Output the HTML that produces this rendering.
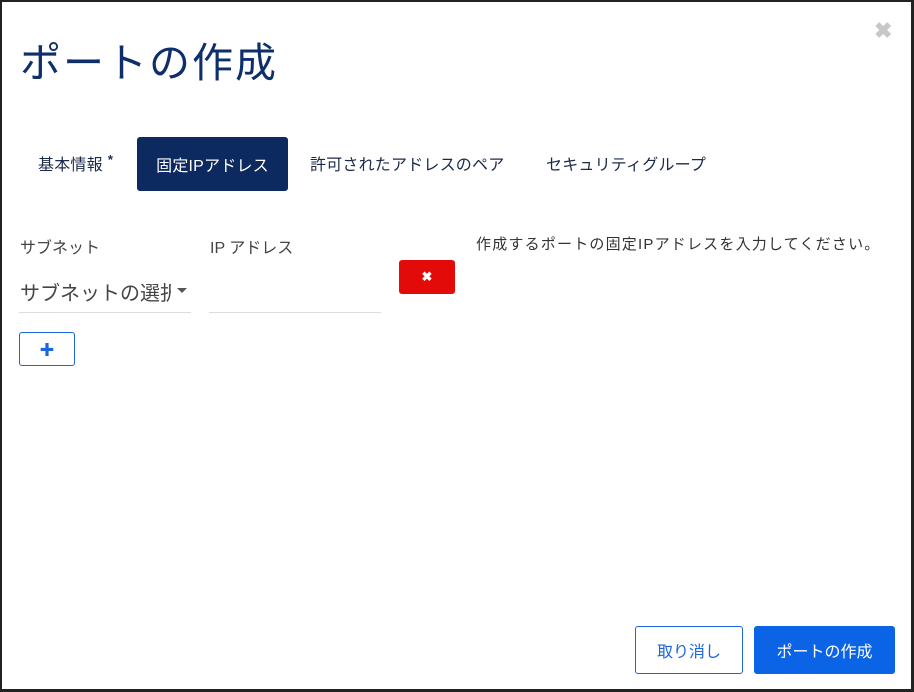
<!DOCTYPE html>
<html><head><meta charset="utf-8"><style>
*{box-sizing:border-box;margin:0;padding:0}
body{width:914px;height:692px;background:#fff;font-family:"Liberation Sans","Noto Sans CJK JP",sans-serif;position:relative;overflow:hidden}
.frame{position:absolute;left:0;top:0;width:914px;height:692px;border:2px solid #222;border-right-width:3px;border-bottom-width:3px}
.a{position:absolute;white-space:nowrap}
.f{display:flex;align-items:center;justify-content:center}
h1{position:absolute;left:20px;top:29px;font-size:41px;font-weight:400;color:#0e2f6b;letter-spacing:2px}
.close{position:absolute;left:874px;top:18px;font-size:22px;color:#c8c8c8;font-weight:bold}
.tab{font-size:16px;color:#1b2a4a;letter-spacing:0.2px}
.active{left:137px;top:137px;width:151px;height:54px;background:#0d2a60;border-radius:3px;color:#fff}
.lbl{font-size:16px;color:#444}
.line{position:absolute;height:1px;background:#ddd}
.del{left:399px;top:260px;width:56px;height:34px;background:#e30a0a;border-radius:3px;color:#fff;font-size:13px;font-weight:bold}
.add{left:19px;top:332px;width:56px;height:34px;border:1px solid #1a65e0;border-radius:3px;color:#1a65e0;font-size:15px;font-weight:bold}
.btn{top:626px;height:48px;border-radius:3px;font-size:16px}
</style></head><body>
<div class="frame"></div>
<h1>ポートの作成</h1>
<div class="close">✖</div>
<div class="a tab" style="left:38px;top:151px">基本情報<sup style="font-size:13px;font-weight:bold;margin-left:5px">*</sup></div>
<div class="a tab active f">固定IPアドレス</div>
<div class="a tab" style="left:310px;top:151px">許可されたアドレスのペア</div>
<div class="a tab" style="left:546px;top:151px">セキュリティグループ</div>
<div class="a lbl" style="left:20px;top:234px">サブネット</div>
<div class="a lbl" style="left:210px;top:234px">IP アドレス</div>
<div class="a" style="left:20px;top:277px;font-size:20px;color:#444;width:151px;overflow:hidden">サブネットの選択</div>
<div class="a" style="left:177px;top:288px;width:0;height:0;border-left:5px solid transparent;border-right:5px solid transparent;border-top:5px solid #555"></div>
<div class="line" style="left:19px;top:312px;width:172px"></div>
<div class="line" style="left:209px;top:312px;width:172px"></div>
<div class="a del f">✖</div>
<div class="a add f">✚</div>
<div class="a" style="left:476px;top:233px;font-size:15px;color:#333;letter-spacing:1.2px">作成するポートの固定IPアドレスを入力してください。</div>
<div class="a btn f" style="left:635px;width:108px;border:1px solid #1a65e0;color:#1a65e0;background:#fff">取り消し</div>
<div class="a btn f" style="left:754px;width:141px;background:#0b63e5;color:#fff">ポートの作成</div>
</body></html>
